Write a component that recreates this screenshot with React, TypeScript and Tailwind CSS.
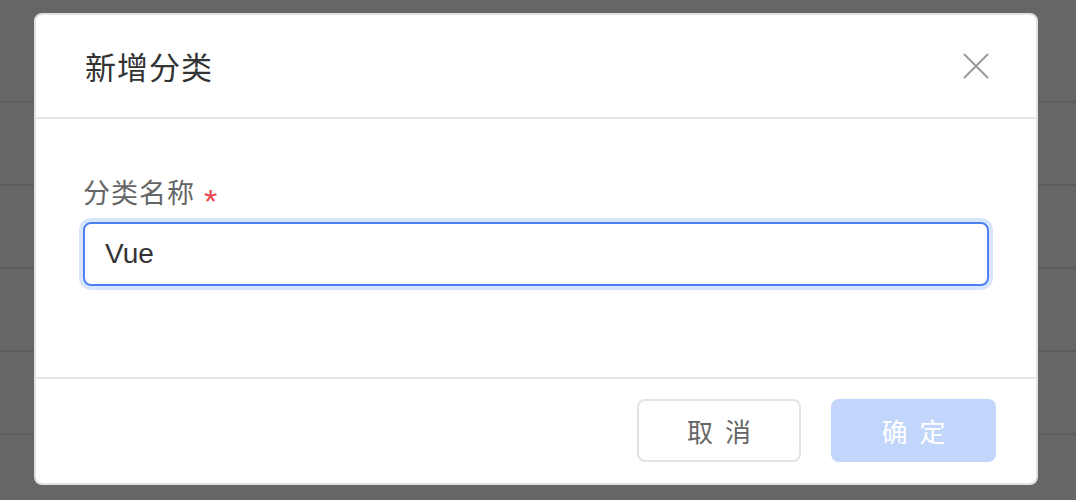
import React from "react";

export default function App() {
  const rows = [103, 83, 83, 83, 83, 83];
  return (
    <div className="relative w-[1076px] h-[500px] overflow-hidden bg-[#666666]" style={{ fontFamily: '"Noto Sans CJK SC", "Noto Sans", sans-serif' }}>
      <div className="flex flex-col">
        {rows.map((h, i) => (
          <div key={i} className="border-b-2 border-[#5d5d5d]" style={{ height: h }} />
        ))}
      </div>
      <div className="absolute left-[34px] top-[13px] w-[1004px] h-[472px] rounded-[8px] border-2 border-[#e2e2e2] bg-white flex flex-col overflow-hidden">
        <div className="h-[104px] flex items-center justify-between pl-[49px] pr-[48px] border-b-2 border-[#e5e5e5]">
          <span className="text-[31px] text-[#333333] leading-none tracking-[1px] pb-[2px]">新增分类</span>
          <svg width="26" height="26" viewBox="0 0 26 26" className="mr-[-1px]">
            <path d="M1 1 L25 25 M25 1 L1 25" stroke="#9a9a9a" strokeWidth="2" fill="none" />
          </svg>
        </div>
        <div className="flex-1 pl-[47px] pr-[47px] pt-[56px]">
          <div className="flex items-center text-[27px] leading-none text-[#666666] h-[32px]">
            <span className="tracking-[1px]">分类名称</span>
            <span className="ml-[9px] text-[#e5484d] text-[34px] leading-none relative top-[10px]" style={{ fontFamily: '"Liberation Sans", sans-serif' }}>*</span>
          </div>
          <div className="mt-[15px] h-[64px] rounded-[8px] border-2 border-[#4a80f0] ring-4 ring-[#d8e4fc] flex items-center pl-[20px] text-[28px] text-[#333333]" style={{ fontFamily: '"Liberation Sans", "Noto Sans CJK SC", sans-serif' }}>
            Vue
          </div>
        </div>
        <div className="h-[106px] border-t-2 border-[#e5e5e5] flex items-start justify-end gap-[30px] pr-[40px] pt-[20px]">
          <div className="w-[164px] h-[63px] rounded-[8px] border-2 border-[#e3e3e3] flex items-center justify-center text-[26px] text-[#666666] tracking-[12px] pl-[12px]">
            取消
          </div>
          <div className="w-[165px] h-[63px] rounded-[8px] bg-[#c2d6fb] flex items-center justify-center text-[26px] text-white tracking-[12px] pl-[12px]">
            确定
          </div>
        </div>
      </div>
    </div>
  );
}
